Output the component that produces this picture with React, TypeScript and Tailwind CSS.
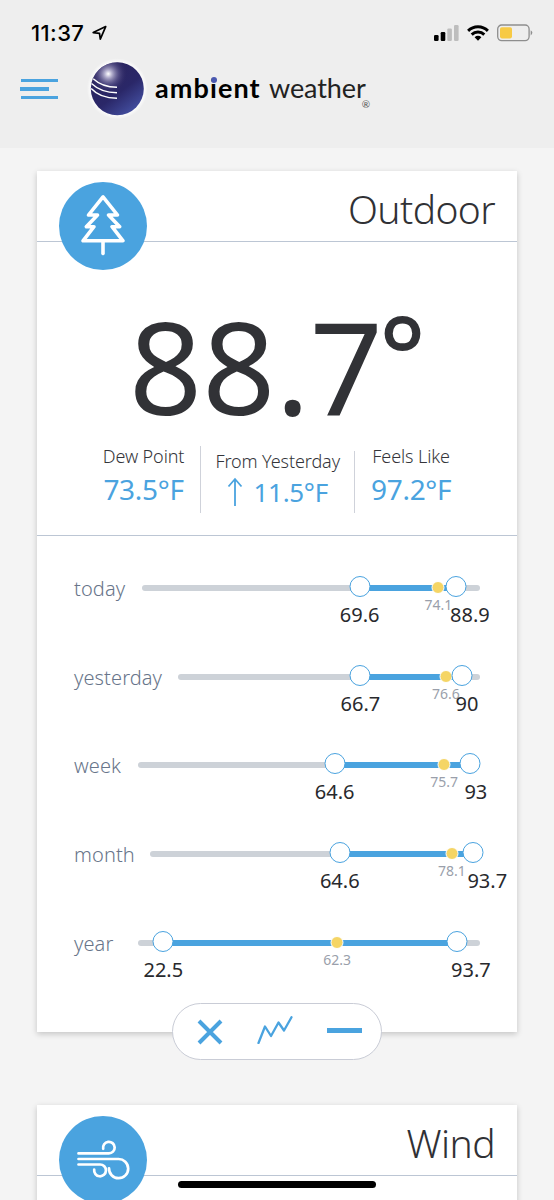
import React from 'react';

interface Range {
  label: string;
  labelWidth: string;
  low: string;
  avg: string;
  high: string;
  lowPos: number; // posições em % da barra
  avgPos: number;
  highPos: number;
}

const ranges: Range[] = [
  { label: 'today', labelWidth: 'w-[68px]', low: '69.6', avg: '74.1', high: '88.9', lowPos: 64.4, avgPos: 87.7, highPos: 92.9 },
  { label: 'yesterday', labelWidth: 'w-[104px]', low: '66.7', avg: '76.6', high: '90', lowPos: 60.4, avgPos: 88.7, highPos: 93.9 },
  { label: 'week', labelWidth: 'w-16', low: '64.6', avg: '75.7', high: '93', lowPos: 57.5, avgPos: 89.5, highPos: 97.2 },
  { label: 'month', labelWidth: 'w-[76px]', low: '64.6', avg: '78.1', high: '93.7', lowPos: 57.5, avgPos: 91.5, highPos: 98 },
  { label: 'year', labelWidth: 'w-16', low: '22.5', avg: '62.3', high: '93.7', lowPos: 7.4, avgPos: 58.2, highPos: 93.3 },
];

function StatusBar() {
  return (
    <div className="flex h-[66px] items-center pl-[31px] pr-[21px]">
      <span className="w-[55px] font-['Inter',sans-serif] text-[22px] font-medium leading-none tracking-[0.4px] text-black">11:37</span>
      <svg className="ml-1.5" width="16" height="16" viewBox="0 0 16 16" fill="none" stroke="#000" strokeWidth="1.7" strokeLinejoin="round">
        <path d="M13.7 1.6 L1.2 7.6 L7.5 8.4 L8.3 14.2 Z" />
      </svg>
      <div className="ml-auto flex items-center gap-2">
        <svg width="25" height="16" viewBox="0 0 25 16">
          <rect x="0" y="10" width="4.6" height="6" rx="1.2" fill="#000" />
          <rect x="6.7" y="7" width="4.6" height="9" rx="1.2" fill="#000" />
          <rect x="13.3" y="3.5" width="4.6" height="12.5" rx="1.2" fill="#bdbdbd" />
          <rect x="20" y="0" width="4.6" height="16" rx="1.2" fill="#bdbdbd" />
        </svg>
        <svg width="22" height="16" viewBox="0 0 22 16" fill="none" stroke="#000" strokeWidth="2.9">
          <path d="M1.1 5.9 A14 14 0 0 1 20.9 5.9" />
          <path d="M4.7 9.6 A9 9 0 0 1 17.3 9.6" />
          <path d="M7.6 12.2 A4.9 4.9 0 0 1 14.4 12.2 L11 15.8 Z" fill="#000" stroke="none" />
        </svg>
        <svg width="36" height="18" viewBox="0 0 36 18">
          <rect x="0.7" y="1" width="31.4" height="15.6" rx="4" fill="none" stroke="#8e8e8e" strokeWidth="1.3" />
          <rect x="3" y="3.2" width="12" height="11.2" rx="1.8" fill="#f7ca45" />
          <path d="M33.7 6.2 Q37 8.8 33.7 11.4 Z" fill="#8e8e8e" />
        </svg>
      </div>
    </div>
  );
}

function Logo() {
  return (
    <div className="flex items-center">
      <svg width="62" height="62" viewBox="0 0 62 62">
        <defs>
          <radialGradient id="halo">
            <stop offset="0.84" stopColor="#fff" />
            <stop offset="1" stopColor="#fff" stopOpacity="0" />
          </radialGradient>
          <linearGradient id="ball" x1="0.2" y1="0.2" x2="0.8" y2="1">
            <stop offset="0" stopColor="#2b2560" />
            <stop offset="0.5" stopColor="#2a2768" />
            <stop offset="1" stopColor="#4653a6" />
          </linearGradient>
          <radialGradient id="shine" cx="0.33" cy="0.22" r="0.36">
            <stop offset="0" stopColor="#fff" />
            <stop offset="0.18" stopColor="#b9b5d2" />
            <stop offset="0.55" stopColor="#6a6498" stopOpacity="0.6" />
            <stop offset="1" stopColor="#2b2560" stopOpacity="0" />
          </radialGradient>
        </defs>
        <circle cx="31.3" cy="30.7" r="30.5" fill="url(#halo)" />
        <circle cx="31.3" cy="30.7" r="26.5" fill="url(#ball)" />
        <circle cx="31.3" cy="30.7" r="26.5" fill="url(#shine)" />
        <g fill="none" stroke="#fff" strokeWidth="1.4">
          <path d="M7.2 20.7 Q16 29 31 29.3" />
          <path d="M5.5 25.5 Q15 34.6 31 34.8" />
          <path d="M5.2 30.5 Q14 40.2 31 40.3" />
        </g>
      </svg>
      <div className="-mt-1 ml-[7px] flex items-baseline font-['Lato',sans-serif] text-[27px] leading-none text-black">
        <span className="w-[114px] font-bold tracking-[1.1px]">
          amb
          <span className="relative">
            i<span className="absolute left-[1px] top-[6px] size-[6px] rounded-full bg-[#4a58b0]" />
          </span>
          ent
        </span>
        <span className="tracking-[-0.1px] text-[#222]">weather</span>
        <span className="relative -left-1 top-2.5 text-[10px] leading-none text-[#555]">®</span>
      </div>
    </div>
  );
}

function CardHeader({ title, children }: { title: string; children: React.ReactNode }) {
  return (
    <div className="flex h-[71px] items-start justify-between border-b border-[#bcc6d4] px-[22px]">
      <div className="relative z-10 mt-[11px] size-[88px] shrink-0 rounded-full bg-[#4aa3df]">{children}</div>
      <h2 className="mt-3 text-[39px] font-light leading-[52px] tracking-[-0.6px] text-[#303135]">{title}</h2>
    </div>
  );
}

function Stat({ label, small, children }: { label: string; small?: boolean; children: React.ReactNode }) {
  return (
    <div className="flex flex-col items-center whitespace-nowrap">
      <span className="text-[18px] font-light leading-5 tracking-[-0.1px] text-[#34353a]">{label}</span>
      <span className={`flex items-center leading-8 tracking-[-0.3px] text-[#4aa3df] ${small ? 'mt-[5px] text-[26px]' : 'mt-[7px] text-[28px]'}`}>
        {children}
      </span>
    </div>
  );
}

function RangeRow({ range }: { range: Range }) {
  return (
    <div className="flex h-[88.7px] items-start">
      <span className={`${range.labelWidth} mt-px shrink-0 text-[20px] font-light leading-6 tracking-[0.1px] text-[#68758a]`}>{range.label}</span>
      <div className="relative mt-[9px] h-1.5 flex-1 rounded-full bg-[#cdd2d8]">
        <div
          className="absolute top-0 h-1.5 bg-[#4aa3df]"
          style={{ left: `${range.lowPos}%`, right: `${100 - range.highPos}%` }}
        />
        <div className="absolute top-[-4px] size-[13px] -translate-x-1/2 rounded-full border-[1.5px] border-white bg-[#f5d565]" style={{ left: `${range.avgPos}%` }} />
        <span className="absolute top-[10px] -translate-x-1/2 text-[14px] leading-5 text-[#9a9fab]" style={{ left: `${range.avgPos}%` }}>
          {range.avg}
        </span>
        <div className="absolute top-[-9px] size-[21px] -translate-x-1/2 rounded-full border-[1.5px] border-[#4aa3df] bg-white" style={{ left: `${range.lowPos}%` }} />
        <div className="absolute top-[-9px] size-[21px] -translate-x-1/2 rounded-full border-[1.5px] border-[#4aa3df] bg-white" style={{ left: `${range.highPos}%` }} />
        <span className="absolute top-[18px] -translate-x-1/2 text-[20px] leading-6 text-[#28292d]" style={{ left: `${range.lowPos}%` }}>
          {range.low}
        </span>
        <span className="absolute top-[18px] -ml-1.5 text-[20px] leading-6 text-[#28292d]" style={{ left: `${range.highPos}%` }}>
          {range.high}
        </span>
      </div>
    </div>
  );
}

function CardActions() {
  return (
    <div className="absolute -bottom-[28px] left-[135px] flex h-[57px] w-[210px] items-center justify-between rounded-full border-[1.5px] border-[#c9ccd6] bg-white pl-[24px] pr-[19px]">
      <svg width="26" height="26" viewBox="0 0 26 26" stroke="#4aa3df" strokeWidth="4">
        <path d="M2 2 L24 24 M24 2 L2 24" />
      </svg>
      <svg className="mb-1" width="36" height="28" viewBox="0 0 36 28" fill="none" stroke="#4aa3df" strokeWidth="2.3" strokeLinecap="round" strokeLinejoin="round">
        <path d="M1.5 27 L8 10.5 L14 20 L21.5 6.5 L27 14.5 L34.5 1.2" />
      </svg>
      <div className="mb-[3px] h-[5px] w-[35px] bg-[#4aa3df]" />
    </div>
  );
}

export default function App() {
  return (
    <div className="relative h-[1200px] w-[554px] overflow-hidden bg-[#f4f4f4] font-['Noto_Sans','Open_Sans',sans-serif]">
      <header className="h-[148px] bg-[#eeeeee]">
        <StatusBar />
        <div className="-mt-2 flex items-center pl-5">
          <button className="mr-[28px] flex w-[38px] flex-col gap-[5px]">
            <span className="ml-px h-[3.5px] w-[37px] bg-[#4aa3df]" />
            <span className="h-[3.5px] w-[29px] bg-[#4aa3df]" />
            <span className="ml-px h-[3.5px] w-[37px] bg-[#4aa3df]" />
          </button>
          <Logo />
        </div>
      </header>

      <main className="flex flex-col gap-[73px] px-[37px] pt-[23px]">
        <section className="relative h-[861px] bg-white shadow-[0_2px_6px_rgba(0,0,0,0.2)]">
          <CardHeader title="Outdoor">
            <svg width="88" height="88" viewBox="0 0 88 88" fill="none" stroke="#fff" strokeWidth="3.6" strokeLinecap="round" strokeLinejoin="round">
              <path d="M44 14.8 L29.5 33 H38.5 L27.3 44.7 H35 L24 58.8 H64 L53 44.7 H60.7 L49.5 33 H58.5 Z" />
              <path d="M44 59 V71.5" />
            </svg>
          </CardHeader>

          <div className="flex h-[294px] flex-col items-center border-b border-[#bcc6d4]">
            <div className="ml-[92px] mt-16 flex self-start text-[128px] leading-[120px] text-[#313236]">
              88.7
              <span className="relative -left-1 -top-[13px] text-[110px] font-medium">°</span>
            </div>
            <div className="mt-5 flex items-end">
              <div className="h-[67px] border-r-[1.5px] border-[#cfd2da] pr-4">
                <Stat label="Dew Point">73.5°F</Stat>
              </div>
              <div className="h-[62px] border-r-[1.5px] border-[#cfd2da] px-[14px]">
                <Stat label="From Yesterday" small>
                  <svg className="mr-2.5" width="16" height="30" viewBox="0 0 16 30" fill="none" stroke="#4aa3df" strokeWidth="1.8">
                    <path d="M8 29 V2 M1.5 9.5 L8 2 L14.5 9.5" />
                  </svg>
                  11.5°F
                </Stat>
              </div>
              <div className="h-[67px] pl-4">
                <Stat label="Feels Like">97.2°F</Stat>
              </div>
            </div>
          </div>

          <div className="px-[37px] pt-[40px]">
            {ranges.map((range) => (
              <RangeRow key={range.label} range={range} />
            ))}
          </div>

          <CardActions />
        </section>

        <section className="h-[400px] shrink-0 bg-white shadow-[0_2px_6px_rgba(0,0,0,0.2)]">
          <CardHeader title="Wind">
            <svg width="88" height="88" viewBox="0 0 88 88" fill="none" stroke="#fff" strokeWidth="2.7" strokeLinecap="round">
              <path d="M19.5 37.4 H49.7 A5.8 5.8 0 1 0 44.2 32.8" />
              <path d="M19.5 43 H59.3 A9.6 9.6 0 1 1 50 52.3" />
              <path d="M19.5 48.5 H41 A5.9 5.9 0 1 1 35.2 53.6" />
            </svg>
          </CardHeader>
        </section>
      </main>

      {/* indicador de início do iOS */}
      <div className="absolute bottom-3 left-[178px] z-20 h-[7px] w-[198px] rounded-full bg-black" />
    </div>
  );
}
